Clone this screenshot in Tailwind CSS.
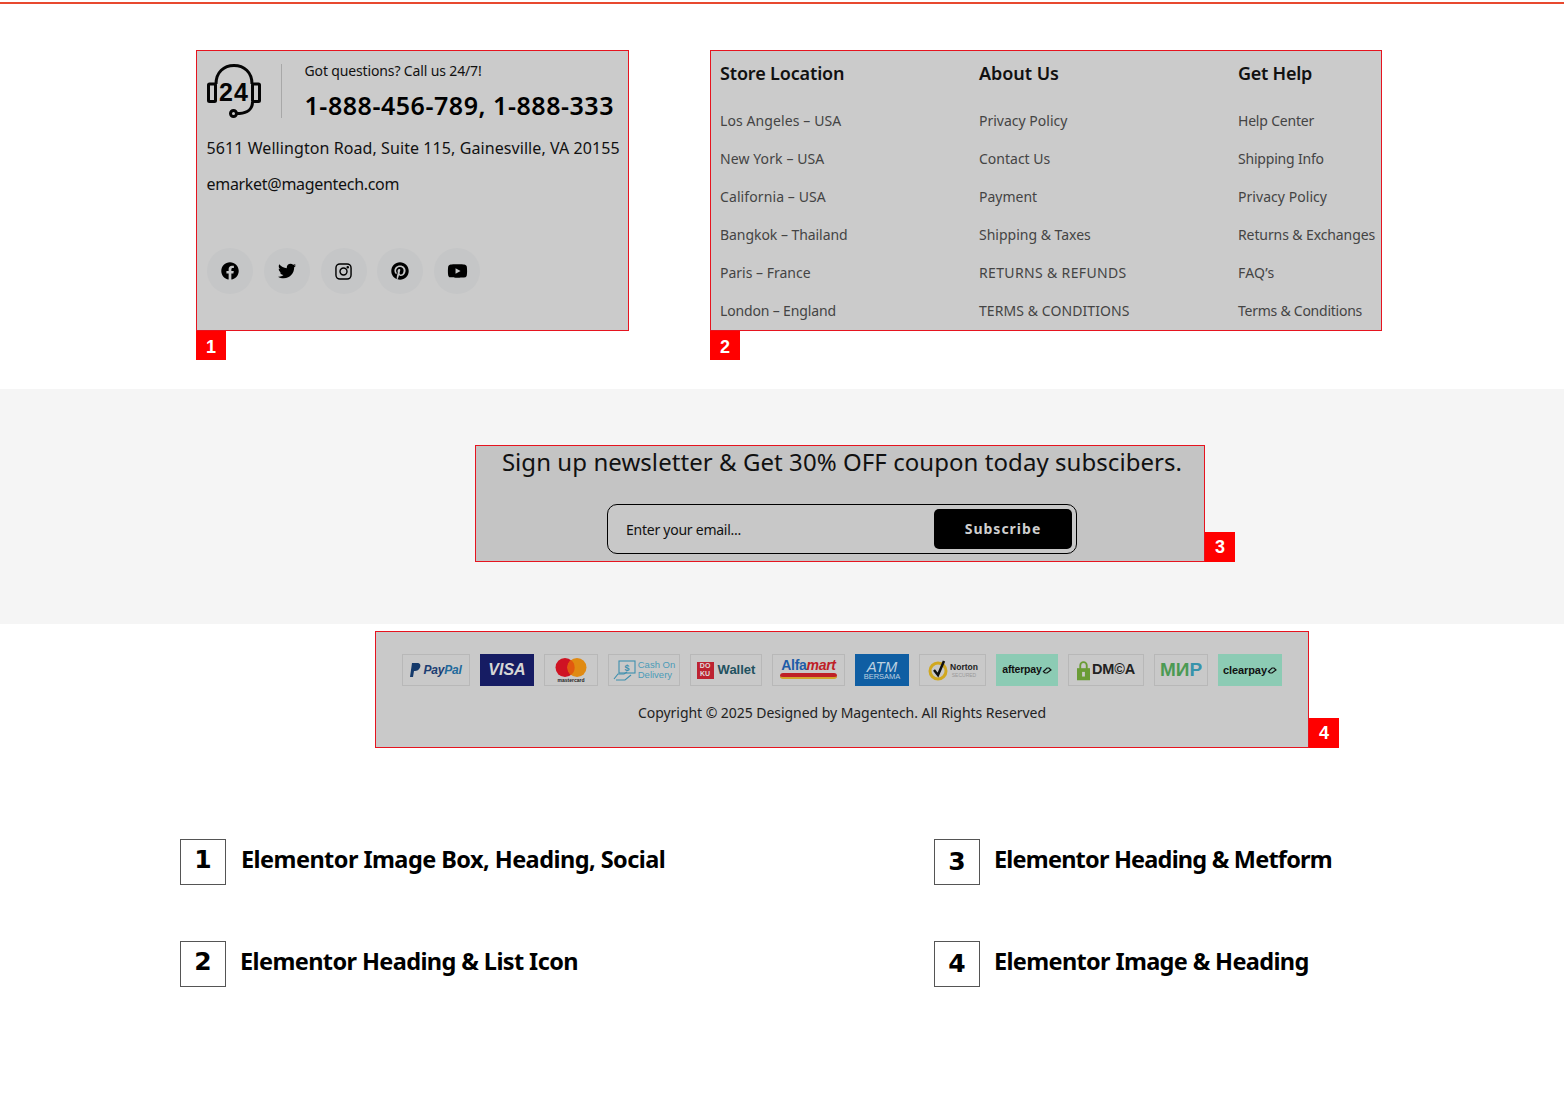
<!DOCTYPE html>
<html lang="en"><head><meta charset="utf-8"><title>Footer elements</title>
<script src="https://cdn.jsdelivr.net/npm/@tailwindcss/browser@4"></script></head>
<body class="bg-white font-['Noto_Sans',sans-serif]">
<div class="w-[1564px] h-[1100px] overflow-hidden">
<div class="h-[4px] pt-[2px]"><div class="h-[2px] bg-[#e8492f]"></div></div>

<section class="h-[385px] pt-[46px] pl-[196px] flex items-start">
  <div class="relative w-[433px] h-[281px] border border-[#e6141f] bg-[#cbcbcb] pl-[9.500px] pt-[13px] text-[#111]">
    <div class="flex items-stretch h-[54px]">
      <svg class="w-[54px] h-[54px] shrink-0" viewBox="0 0 54 54" fill="none" stroke="#050505" stroke-width="3">
        <rect x="1.500" y="20" width="7" height="17.500" rx="1"/><rect x="45.500" y="20" width="7" height="17.500" rx="1"/>
        <path d="M9 20C9 8 17 1.500 27 1.500S45 8 45 20"/><path d="M45.500 38c0 7-5 11-13 11.500h-3"/>
        <circle cx="26.500" cy="49.500" r="3"/>
        <text x="27" y="36.500" text-anchor="middle" font-family="Liberation Sans" font-size="25" font-weight="700" fill="#050505" stroke="none" letter-spacing="1">24</text>
      </svg>
      <div class="w-px bg-[#a8a8a8] ml-[20px]"></div>
      <div class="ml-[23px] -mt-[2px]">
        <p class="text-[14px] leading-[18px] tracking-[-0.14px]">Got questions? Call us 24/7!</p>
        <p class="mt-[10px] text-[25px] leading-[30px] font-semibold text-black tracking-[0.54px] whitespace-nowrap">1-888-456-789, 1-888-333</p>
      </div>
    </div>
    <p class="mt-[18px] text-[16px] leading-[24px] tracking-[0.08px] whitespace-nowrap">5611 Wellington Road, Suite 115, Gainesville, VA 20155</p>
    <p class="mt-[12px] text-[16px] leading-[24px] tracking-[-0.3px]">emarket@magentech.com</p>
    <div class="mt-[52px] ml-[0.500px] flex gap-[10.800px]">
      <a class="size-[46px] rounded-full bg-[#c5c6c7] flex items-center justify-center"><svg class="size-[18px]" viewBox="0 0 512 512" fill="#000"><path d="M504 256C504 119 393 8 256 8S8 119 8 256c0 123.780 90.690 226.380 209.250 245V327.690h-63V256h63v-54.640c0-62.150 37-96.480 93.670-96.480 27.140 0 55.520 4.840 55.520 4.840v61h-31.280c-30.800 0-40.410 19.120-40.410 38.730V256h68.780l-11 71.690h-57.780V501C413.310 482.380 504 379.780 504 256z"/></svg></a>
      <a class="size-[46px] rounded-full bg-[#c5c6c7] flex items-center justify-center"><svg class="size-[18px]" viewBox="0 0 512 512" fill="#000"><path d="M459.370 151.716c.325 4.548.325 9.097.325 13.645 0 138.720-105.583 298.558-298.558 298.558-59.452 0-114.680-17.219-161.137-47.106 8.447.974 16.568 1.299 25.340 1.299 49.055 0 94.213-16.568 130.274-44.832-46.132-.975-84.792-31.188-98.112-72.772 6.498.974 12.995 1.624 19.818 1.624 9.421 0 18.843-1.300 27.614-3.573-48.081-9.747-84.143-51.980-84.143-102.985v-1.299c13.969 7.797 30.214 12.670 47.431 13.319-28.264-18.843-46.781-51.005-46.781-87.391 0-19.492 5.197-37.360 14.294-52.954 51.655 63.675 129.300 105.258 216.365 109.807-1.624-7.797-2.599-15.918-2.599-24.040 0-57.828 46.782-104.934 104.934-104.934 30.213 0 57.502 12.670 76.670 33.137 23.715-4.548 46.456-13.320 66.599-25.340-7.798 24.366-24.366 44.833-46.132 57.827 21.117-2.273 41.584-8.122 60.426-16.243-14.292 20.791-32.161 39.308-52.628 54.253z"/></svg></a>
      <a class="size-[46px] rounded-full bg-[#c5c6c7] flex items-center justify-center"><svg class="size-[17px]" viewBox="0 0 18 18" fill="none" stroke="#000" stroke-width="1.500"><rect x="1" y="1" width="16" height="16" rx="4.200"/><circle cx="9" cy="9" r="3.700"/><circle cx="13.500" cy="4.500" r=".6" fill="#000"/></svg></a>
      <a class="size-[46px] rounded-full bg-[#c5c6c7] flex items-center justify-center"><svg class="size-[18px]" viewBox="0 0 496 512" fill="#000"><path d="M496 256c0 137-111 248-248 248-25.600 0-50.200-3.900-73.400-11.100 10.100-16.500 25.200-43.500 30.800-65 3-11.600 15.400-59 15.400-59 8.100 15.400 31.700 28.500 56.800 28.500 74.800 0 128.700-68.800 128.700-154.300 0-81.900-66.900-143.200-152.900-143.200-107 0-163.900 71.800-163.900 150.100 0 36.400 19.400 81.700 50.300 96.100 4.700 2.200 7.200 1.200 8.300-3.300.8-3.400 5-20.300 6.900-28.100.6-2.500.3-4.700-1.700-7.100-10.100-12.500-18.300-35.300-18.300-56.600 0-54.700 41.400-107.600 112-107.600 60.900 0 103.600 41.500 103.600 100.900 0 67.100-33.900 113.600-78 113.600-24.300 0-42.600-20.100-36.700-44.800 7-29.500 20.500-61.300 20.500-82.600 0-19-10.200-34.900-31.400-34.900-24.900 0-44.900 25.700-44.900 60.200 0 22 7.400 36.800 7.400 36.800s-24.500 103.800-29 123.200c-5 21.400-3 51.600-.9 71.200C65.400 450.900 0 361.100 0 256 0 119 111 8 248 8s248 111 248 248z"/></svg></a>
      <a class="size-[46px] rounded-full bg-[#c5c6c7] flex items-center justify-center"><svg class="w-[21px] h-[18px]" viewBox="0 0 576 512" fill="#000"><path d="M549.655 124.083c-6.281-23.650-24.787-42.276-48.284-48.597C458.781 64 288 64 288 64S117.220 64 74.629 75.486c-23.497 6.322-42.003 24.947-48.284 48.597-11.412 42.867-11.412 132.305-11.412 132.305s0 89.438 11.412 132.305c6.281 23.650 24.787 41.500 48.284 47.821C117.220 448 288 448 288 448s170.780 0 213.371-11.486c23.497-6.321 42.003-24.171 48.284-47.821 11.412-42.867 11.412-132.305 11.412-132.305s0-89.438-11.412-132.305zm-317.510 213.508V175.185l142.739 81.205-142.739 81.201z"/></svg></a>
    </div>
    <span class="absolute left-[-1px] top-full mt-[1px] w-[30px] h-[29px] bg-[#f00] text-white font-['Liberation_Sans'] font-bold text-[18px] leading-[32px] text-center">1</span>
  </div>

  <div class="relative ml-[81px] w-[672px] h-[281px] border border-[#e6141f] bg-[#cbcbcb] pl-[9px] pt-[9px] grid grid-cols-[259px_259px_1fr] text-[#444]">
    <div>
      <h3 class="text-[18px] leading-[26px] font-semibold text-[#111] tracking-[-0.15px]">Store Location</h3>
      <ul class="mt-[16px] text-[14px] leading-[38px] tracking-[0.1px]"><li>Los Angeles – USA</li><li>New York – USA</li><li>California – USA</li><li class="tracking-[-0.05px]">Bangkok – Thailand</li><li class="tracking-[0px]">Paris – France</li><li class="tracking-[-0.15px]">London – England</li></ul>
    </div>
    <div>
      <h3 class="text-[18px] leading-[26px] font-semibold text-[#111] tracking-[-0.05px]">About Us</h3>
      <ul class="mt-[16px] text-[14px] leading-[38px] tracking-[0px]"><li>Privacy Policy</li><li>Contact Us</li><li>Payment</li><li>Shipping &amp; Taxes</li><li class="tracking-[0.35px]">RETURNS &amp; REFUNDS</li><li class="tracking-[0.08px]">TERMS &amp; CONDITIONS</li></ul>
    </div>
    <div>
      <h3 class="text-[18px] leading-[26px] font-semibold text-[#111] tracking-[-0.25px]">Get Help</h3>
      <ul class="mt-[16px] text-[14px] leading-[38px] tracking-[-0.2px] whitespace-nowrap"><li>Help Center</li><li>Shipping Info</li><li class="tracking-[0.05px]">Privacy Policy</li><li class="tracking-[-0.1px]">Returns &amp; Exchanges</li><li class="tracking-[0.2px]">FAQ’s</li><li class="tracking-[-0.25px]">Terms &amp; Conditions</li></ul>
    </div>
    <span class="absolute left-[-1px] top-full mt-[1px] w-[30px] h-[29px] bg-[#f00] text-white font-['Liberation_Sans'] font-bold text-[18px] leading-[32px] text-center">2</span>
  </div>
</section>

<section class="h-[235px] bg-[#f5f5f5] pt-[56px] pl-[475px]">
  <div class="relative w-[730px] h-[117px] border border-[#e6141f] bg-[#c4c4c4] flex flex-col items-center text-[#111]">
    <h2 class="ml-[4px] text-[24px] leading-[32px] tracking-[0.06px] whitespace-nowrap">Sign up newsletter &amp; Get 30% OFF coupon today subscibers.</h2>
    <div class="mt-[26px] ml-[4px] w-[470px] h-[50px] rounded-[10px] border border-black bg-[#c8c8c8] flex items-center justify-between pl-[18px] pr-[4px]">
      <span class="text-[14px] tracking-[-0.25px]">Enter your email...</span>
      <button class="w-[138px] h-[40px] rounded-[5px] bg-black text-[#cfcfcf] text-[14px] leading-[38px] font-bold tracking-[1px] pb-[1px]">Subscribe</button>
    </div>
    <span class="absolute left-full ml-[1px] bottom-[-1px] w-[30px] h-[30px] bg-[#f00] text-white font-['Liberation_Sans'] font-bold text-[18px] leading-[31px] text-center">3</span>
  </div>
</section>

<section class="pt-[7px] pl-[375px]">
  <div class="relative w-[934px] h-[117px] border border-[#e6141f] bg-[#c9c9c9] flex flex-col items-center pt-[22px]">
    <div class="flex gap-[10px] h-[32px] font-['Liberation_Sans']">
      <div class="w-[68px] border border-[#b8b8b8] flex items-center justify-center gap-[2px]"><svg class="w-[11px] h-[15px]" viewBox="0 0 11 15"><path d="M2 0h5c3 0 4 2 3 4.500C9 7 7 8 5 8H4l-1 6H0z" fill="#153a6b"/></svg><span class="text-[12px] font-bold italic tracking-[-0.2px]"><span class="text-[#1b3d72]">Pay</span><span class="text-[#1f6a9c]">Pal</span></span></div>
      <div class="w-[54px] bg-[#161c63] flex items-center justify-center"><span class="text-[16px] font-bold italic text-[#d6d6d6]">VISA</span></div>
      <div class="w-[54px] border border-[#b8b8b8] flex flex-col items-center pt-[3px]"><svg class="w-[32px] h-[19px]" viewBox="0 0 32 19"><circle cx="10" cy="9.500" r="9.500" fill="#cf1323"/><circle cx="22" cy="9.500" r="9.500" fill="#e08a12"/><path d="M16 2a9.500 9.500 0 0 1 0 15a9.500 9.500 0 0 1 0-15z" fill="#e2590f"/></svg><span class="text-[5px] leading-[6px] font-bold text-[#222]">mastercard</span></div>
      <div class="w-[72px] border border-[#b8b8b8] flex items-center justify-center gap-[2px]"><svg class="w-[23px] h-[22px]" viewBox="0 0 23 22" fill="none" stroke="#3d8fae" stroke-width="1.100"><rect x="6" y="2" width="16" height="12"/><path d="M1 20l4-5h6l3-2M3 21h9l6-5"/><text x="14" y="12" font-size="9" font-weight="700" fill="#3d8fae" stroke="none" text-anchor="middle">$</text></svg><span class="text-[9.500px] leading-[10px] text-[#4b9bb8]">Cash On<br>Delivery</span></div>
      <div class="w-[72px] border border-[#b8b8b8] flex items-center justify-center gap-[4px]"><span class="size-[17px] bg-[#bd2331] text-[#ddd] text-[7px] font-bold leading-[8px] flex items-center justify-center text-center">DO<br>KU</span><span class="text-[13px] font-bold text-[#22515f]">Wallet</span></div>
      <div class="w-[73px] border border-[#b8b8b8] flex flex-col items-center pt-[3px]"><span class="text-[14px] leading-[15px] font-bold tracking-[-0.3px]"><span class="text-[#1e5ca8]">Alfa</span><span class="text-[#bf2026] italic">mart</span></span><span class="w-[57px] h-[6px] rounded-full bg-[#bf2026] border-b-2 border-[#d2a52c]"></span></div>
      <div class="w-[54px] bg-[#0f5ea3] flex flex-col items-center justify-center text-[#bcd0e0]"><span class="text-[15px] leading-[13px] italic">ATM</span><span class="text-[7.500px] leading-[8px]">BERSAMA</span></div>
      <div class="w-[67px] border border-[#b8b8b8] flex items-center justify-center gap-[1px]"><svg class="size-[22px]" viewBox="0 0 22 22" fill="none"><circle cx="11" cy="12" r="8" stroke="#d1a820" stroke-width="3"/><path d="M7 11l4 5 6-14" stroke="#111" stroke-width="2.500"/></svg><span class="flex flex-col items-center"><span class="text-[8.500px] leading-[9px] font-bold text-[#222]">Norton</span><span class="text-[5px] leading-[6px] text-[#999]">SECURED</span></span></div>
      <div class="w-[62px] bg-[#8ccbb4] flex items-center justify-center"><span class="text-[10.500px] font-bold text-[#111] tracking-[-0.2px]">afterpay</span><svg class="w-[10px] h-[8px]" viewBox="0 0 10 8" fill="none" stroke="#111" stroke-width="1.200"><path d="M1 6l4-4h2l2 2-4 3H3L1 5"/></svg></div>
      <div class="w-[76px] border border-[#b8b8b8] flex items-center justify-center gap-[2px]"><svg class="w-[13px] h-[21px]" viewBox="0 0 14 21"><path d="M3.500 9V5a3.500 3.500 0 0 1 7 0v4" fill="none" stroke="#6a9c36" stroke-width="2"/><rect y="8" width="14" height="13" fill="#6a9c36"/><rect x="5.500" y="12" width="3" height="5" fill="#c9c9c9"/></svg><span class="text-[14.500px] font-bold text-[#222] tracking-[-0.2px]">DM©A</span></div>
      <div class="w-[54px] border border-[#b8b8b8] flex items-center justify-center"><span class="text-[19px] font-bold text-[#4c9a53]">МИ<span class="text-[#3793ab]">Р</span></span></div>
      <div class="w-[64px] bg-[#8ccbb4] flex items-center justify-center"><span class="text-[11px] font-bold text-[#111] tracking-[-0.1px]">clearpay</span><svg class="w-[10px] h-[8px]" viewBox="0 0 10 8" fill="none" stroke="#111" stroke-width="1.200"><path d="M1 6l4-4h2l2 2-4 3H3L1 5"/></svg></div>
    </div>
    <p class="mt-[17px] text-[14px] leading-[20px] text-[#222] tracking-[-0.05px]">Copyright © 2025 Designed by Magentech. All Rights Reserved</p>
    <span class="absolute left-full ml-[1px] bottom-[-1px] w-[30px] h-[30px] bg-[#f00] text-white font-['Liberation_Sans'] font-bold text-[18px] leading-[31px] text-center">4</span>
  </div>
</section>

<section class="mt-[91px] ml-[180px] grid grid-cols-[754px_1fr] gap-y-[56px] font-bold text-black text-[23.500px]">
  <div class="flex items-center h-[46px]"><span class="size-[46px] border border-[#555] flex items-center justify-center font-['DejaVu_Sans'] text-[25px] pb-[4px]">1</span><span class="ml-[15px] pb-[4px] tracking-[-0.55px]">Elementor Image Box, Heading, Social</span></div>
  <div class="flex items-center h-[46px]"><span class="size-[46px] border border-[#555] flex items-center justify-center font-['DejaVu_Sans'] text-[25px]">3</span><span class="ml-[14px] pb-[4px] tracking-[-0.8px]">Elementor Heading &amp; Metform</span></div>
  <div class="flex items-center h-[46px]"><span class="size-[46px] border border-[#555] flex items-center justify-center font-['DejaVu_Sans'] text-[25px] pb-[4px]">2</span><span class="ml-[14px] pb-[4px] tracking-[-0.6px]">Elementor Heading &amp; List Icon</span></div>
  <div class="flex items-center h-[46px]"><span class="size-[46px] border border-[#555] flex items-center justify-center font-['DejaVu_Sans'] text-[25px]">4</span><span class="ml-[14px] pb-[4px] tracking-[-0.65px]">Elementor Image &amp; Heading</span></div>
</section>
</div>
</body></html>
